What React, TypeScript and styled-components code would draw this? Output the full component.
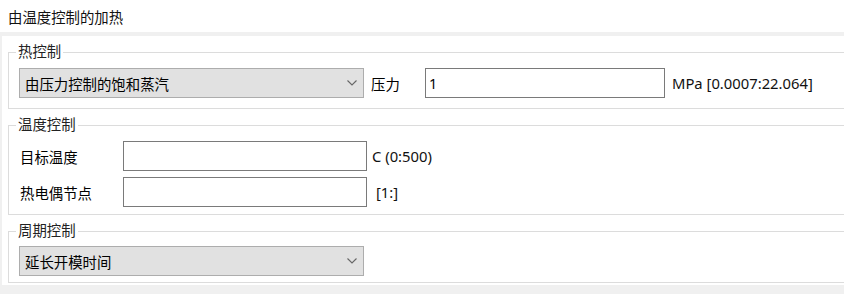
import React from "react";
import styled, { createGlobalStyle } from "styled-components";

const Global = createGlobalStyle`
  html, body { margin: 0; padding: 0; }
  body {
    background: #f0f0f0;
    overflow: hidden;
    font-family: "Noto Sans", "Noto Sans CJK SC", sans-serif;
    font-size: 14.4px;
    color: #000;
  }
`;

const Page = styled.div`
  width: 844px;
  height: 294px;
  display: flex;
  flex-direction: column;
`;

const Header = styled.div`
  height: 32px;
  background: #fff;
  display: flex;
  align-items: center;
  padding-left: 8px;
  color: #111;
`;

const Panel = styled.div`
  margin-top: 4px;
  margin-left: 2px;
  background: #fff;
  padding: 16px 0 2px 6px;
  display: flex;
  flex-direction: column;
  gap: 16px;
`;

const Group = styled.div<{ $pt: number; $pb: number; $gap?: number }>`
  position: relative;
  border: 1px solid #dcdcdc;
  border-right: none;
  padding: ${(p) => p.$pt}px 0 ${(p) => p.$pb}px 10px;
  display: flex;
  flex-direction: column;
  gap: ${(p) => p.$gap ?? 0}px;
`;

const Legend = styled.span`
  position: absolute;
  top: -10px;
  left: 7px;
  padding: 0 2px;
  background: #fff;
  line-height: 18px;
  color: #222;
`;

const Row = styled.div`
  display: flex;
  align-items: center;
  height: 30px;
`;

const Select = styled.div<{ $w: number }>`
  box-sizing: border-box;
  width: ${(p) => p.$w}px;
  height: 30px;
  background: #e1e1e1;
  border: 1px solid #adadad;
  display: flex;
  align-items: center;
  justify-content: space-between;
  padding: 0 6px 0 5px;
`;

const Chevron = () => (
  <svg width="10" height="6" viewBox="0 0 10 6">
    <polyline points="0.5,0.5 5,5 9.5,0.5" fill="none" stroke="#666" strokeWidth="1.1" />
  </svg>
);

const Label = styled.span<{ $w: number; $ml?: number }>`
  width: ${(p) => p.$w}px;
  margin-left: ${(p) => p.$ml ?? 0}px;
  flex-shrink: 0;
`;

const Input = styled.div<{ $w: number }>`
  box-sizing: border-box;
  width: ${(p) => p.$w}px;
  height: 30px;
  background: #fff;
  border: 1px solid #7a7a7a;
  display: flex;
  align-items: center;
  padding-left: 3px;
`;

const Unit = styled.span<{ $ml: number }>`
  margin-left: ${(p) => p.$ml}px;
  font-size: 14.8px;
  color: #111;
`;

export default function App() {
  return (
    <Page>
      <Global />
      <Header>由温度控制的加热</Header>
      <Panel>
        <Group $pt={15} $pb={10}>
          <Legend>热控制</Legend>
          <Row>
            <Select $w={345}>
              <span>由压力控制的饱和蒸汽</span>
              <Chevron />
            </Select>
            <Label $w={54} $ml={7}>压力</Label>
            <Input $w={240}>1</Input>
            <Unit $ml={7}>MPa [0.0007:22.064]</Unit>
          </Row>
        </Group>
        <Group $pt={15} $pb={7} $gap={6}>
          <Legend>温度控制</Legend>
          <Row>
            <Label $w={103} $ml={1}>目标温度</Label>
            <Input $w={244} />
            <Unit $ml={5}>C (0:500)</Unit>
          </Row>
          <Row>
            <Label $w={103} $ml={1}>热电偶节点</Label>
            <Input $w={244} />
            <Unit $ml={9}>[1:]</Unit>
          </Row>
        </Group>
        <Group $pt={14} $pb={6}>
          <Legend>周期控制</Legend>
          <Row>
            <Select $w={345}>
              <span>延长开模时间</span>
              <Chevron />
            </Select>
          </Row>
        </Group>
      </Panel>
    </Page>
  );
}
